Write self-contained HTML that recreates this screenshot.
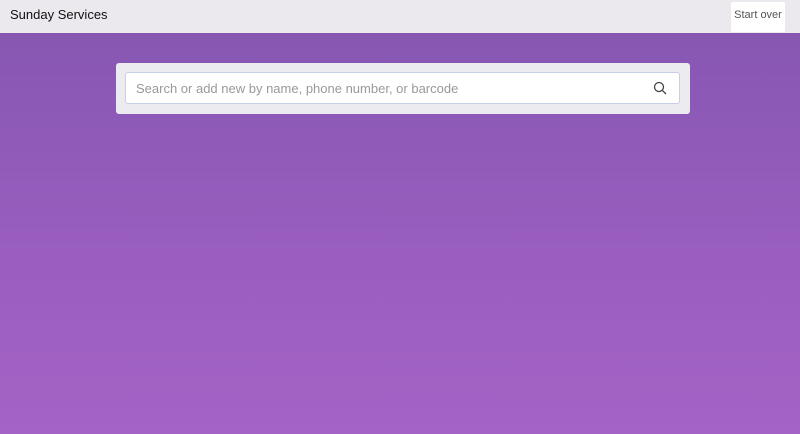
<!DOCTYPE html>
<html><head><style>
body{margin:0;width:800px;height:434px;overflow:hidden;font-family:"Liberation Sans",sans-serif;background:linear-gradient(#8456b0,#9a5ec0 60%,#a463c6);position:relative}
.hdr{position:absolute;left:0;top:0;width:800px;height:33px;background:#ebe9ee}
.t{position:absolute;left:10px;top:7px;font-size:13px;color:#111}
.btn{position:absolute;left:731px;top:2px;width:54px;height:30px;background:#fff;border-radius:2px;font-size:11px;color:#555;text-align:center;line-height:26px}
.card{position:absolute;left:116px;top:63px;width:574px;height:51px;background:#ecebf0;border-radius:3px}
.in{position:absolute;left:9px;top:9px;width:553px;height:30px;background:#fff;border:1px solid #c9d0e6;border-radius:3px}
.ph{position:absolute;left:10px;top:8px;font-size:13px;color:#999}
</style></head><body>
<div class="hdr"><div class="t">Sunday Services</div><div class="btn">Start over</div></div>
<div class="card"><div class="in"><div class="ph">Search or add new by name, phone number, or barcode</div>
<svg style="position:absolute;left:527px;top:8px" width="14" height="14" viewBox="0 0 14 14"><circle cx="6" cy="6" r="4.5" fill="none" stroke="#444" stroke-width="1.3"/><path d="M9.3 9.3L13 13" stroke="#444" stroke-width="1.3"/></svg>
</div></div>
</body></html>
